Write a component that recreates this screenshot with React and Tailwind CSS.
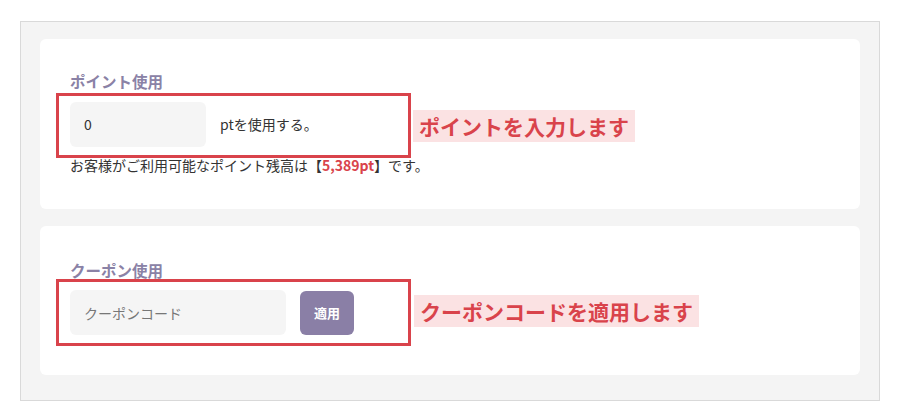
const font = { fontFamily: '"Noto Sans CJK JP", "Noto Sans", sans-serif' };

const Annotation = ({ box, pos, text }) => (
  <>
    <div className={`absolute border-[3px] border-[#d9434b] pointer-events-none ${box}`} />
    <div className={`absolute px-[6px] text-[21px] font-bold leading-[32px] text-[#d9434b] bg-[#fbe2e3] ${pos}`}>
      {text}
    </div>
  </>
);

export default function App() {
  return (
    <div className="w-[900px] h-[420px] bg-white pt-[21px] pl-[20px]" style={font}>
      <div className="w-[860px] h-[380px] border border-[#d9d9d9] bg-[#f4f4f4] px-[19px] pt-[17px] flex flex-col gap-[17px]">
        {/* ポイント */}
        <div className="relative w-[820px] h-[170px] bg-white rounded-md pt-[31px] pl-[30px]">
          <p className="text-[15.5px] font-bold leading-[22px] text-[#8a82a6]">ポイント使用</p>
          <div className="mt-[10px] flex items-center gap-[14px]">
            <div className="w-[136px] h-[45px] rounded-md bg-[#f5f5f5] pl-[14px] flex items-center text-[14px] text-[#333]">0</div>
            <span className="text-[14px] text-[#333]">ptを使用する。</span>
          </div>
          <p className="mt-[8px] text-[14px] leading-[20px] text-[#333]">
            お客様がご利用可能なポイント残高は【<span className="font-bold text-[#d9434b]">5,389pt</span>】です。
          </p>
          <Annotation box="left-[16px] top-[54px] w-[355px] h-[65px]" pos="left-[373px] top-[71px]" text="ポイントを入力します" />
        </div>

        {/* クーポン */}
        <div className="relative w-[820px] h-[149px] bg-white rounded-md pt-[33px] pl-[30px]">
          <p className="text-[15.5px] font-bold leading-[22px] text-[#8a82a6]">クーポン使用</p>
          <div className="mt-[9px] flex items-center gap-[14px]">
            <input
              placeholder="クーポンコード"
              className="w-[216px] h-[45px] rounded-md bg-[#f5f5f5] pl-[14px] text-[14px] text-[#333] placeholder:text-[#777] outline-none"
              style={font}
            />
            <button className="w-[54px] h-[44px] rounded-md bg-[#8a7fa6] text-white text-[13px] font-bold">適用</button>
          </div>
          <Annotation box="left-[16px] top-[53px] w-[355px] h-[67px]" pos="left-[374px] top-[69px]" text="クーポンコードを適用します" />
        </div>
      </div>
    </div>
  );
}
